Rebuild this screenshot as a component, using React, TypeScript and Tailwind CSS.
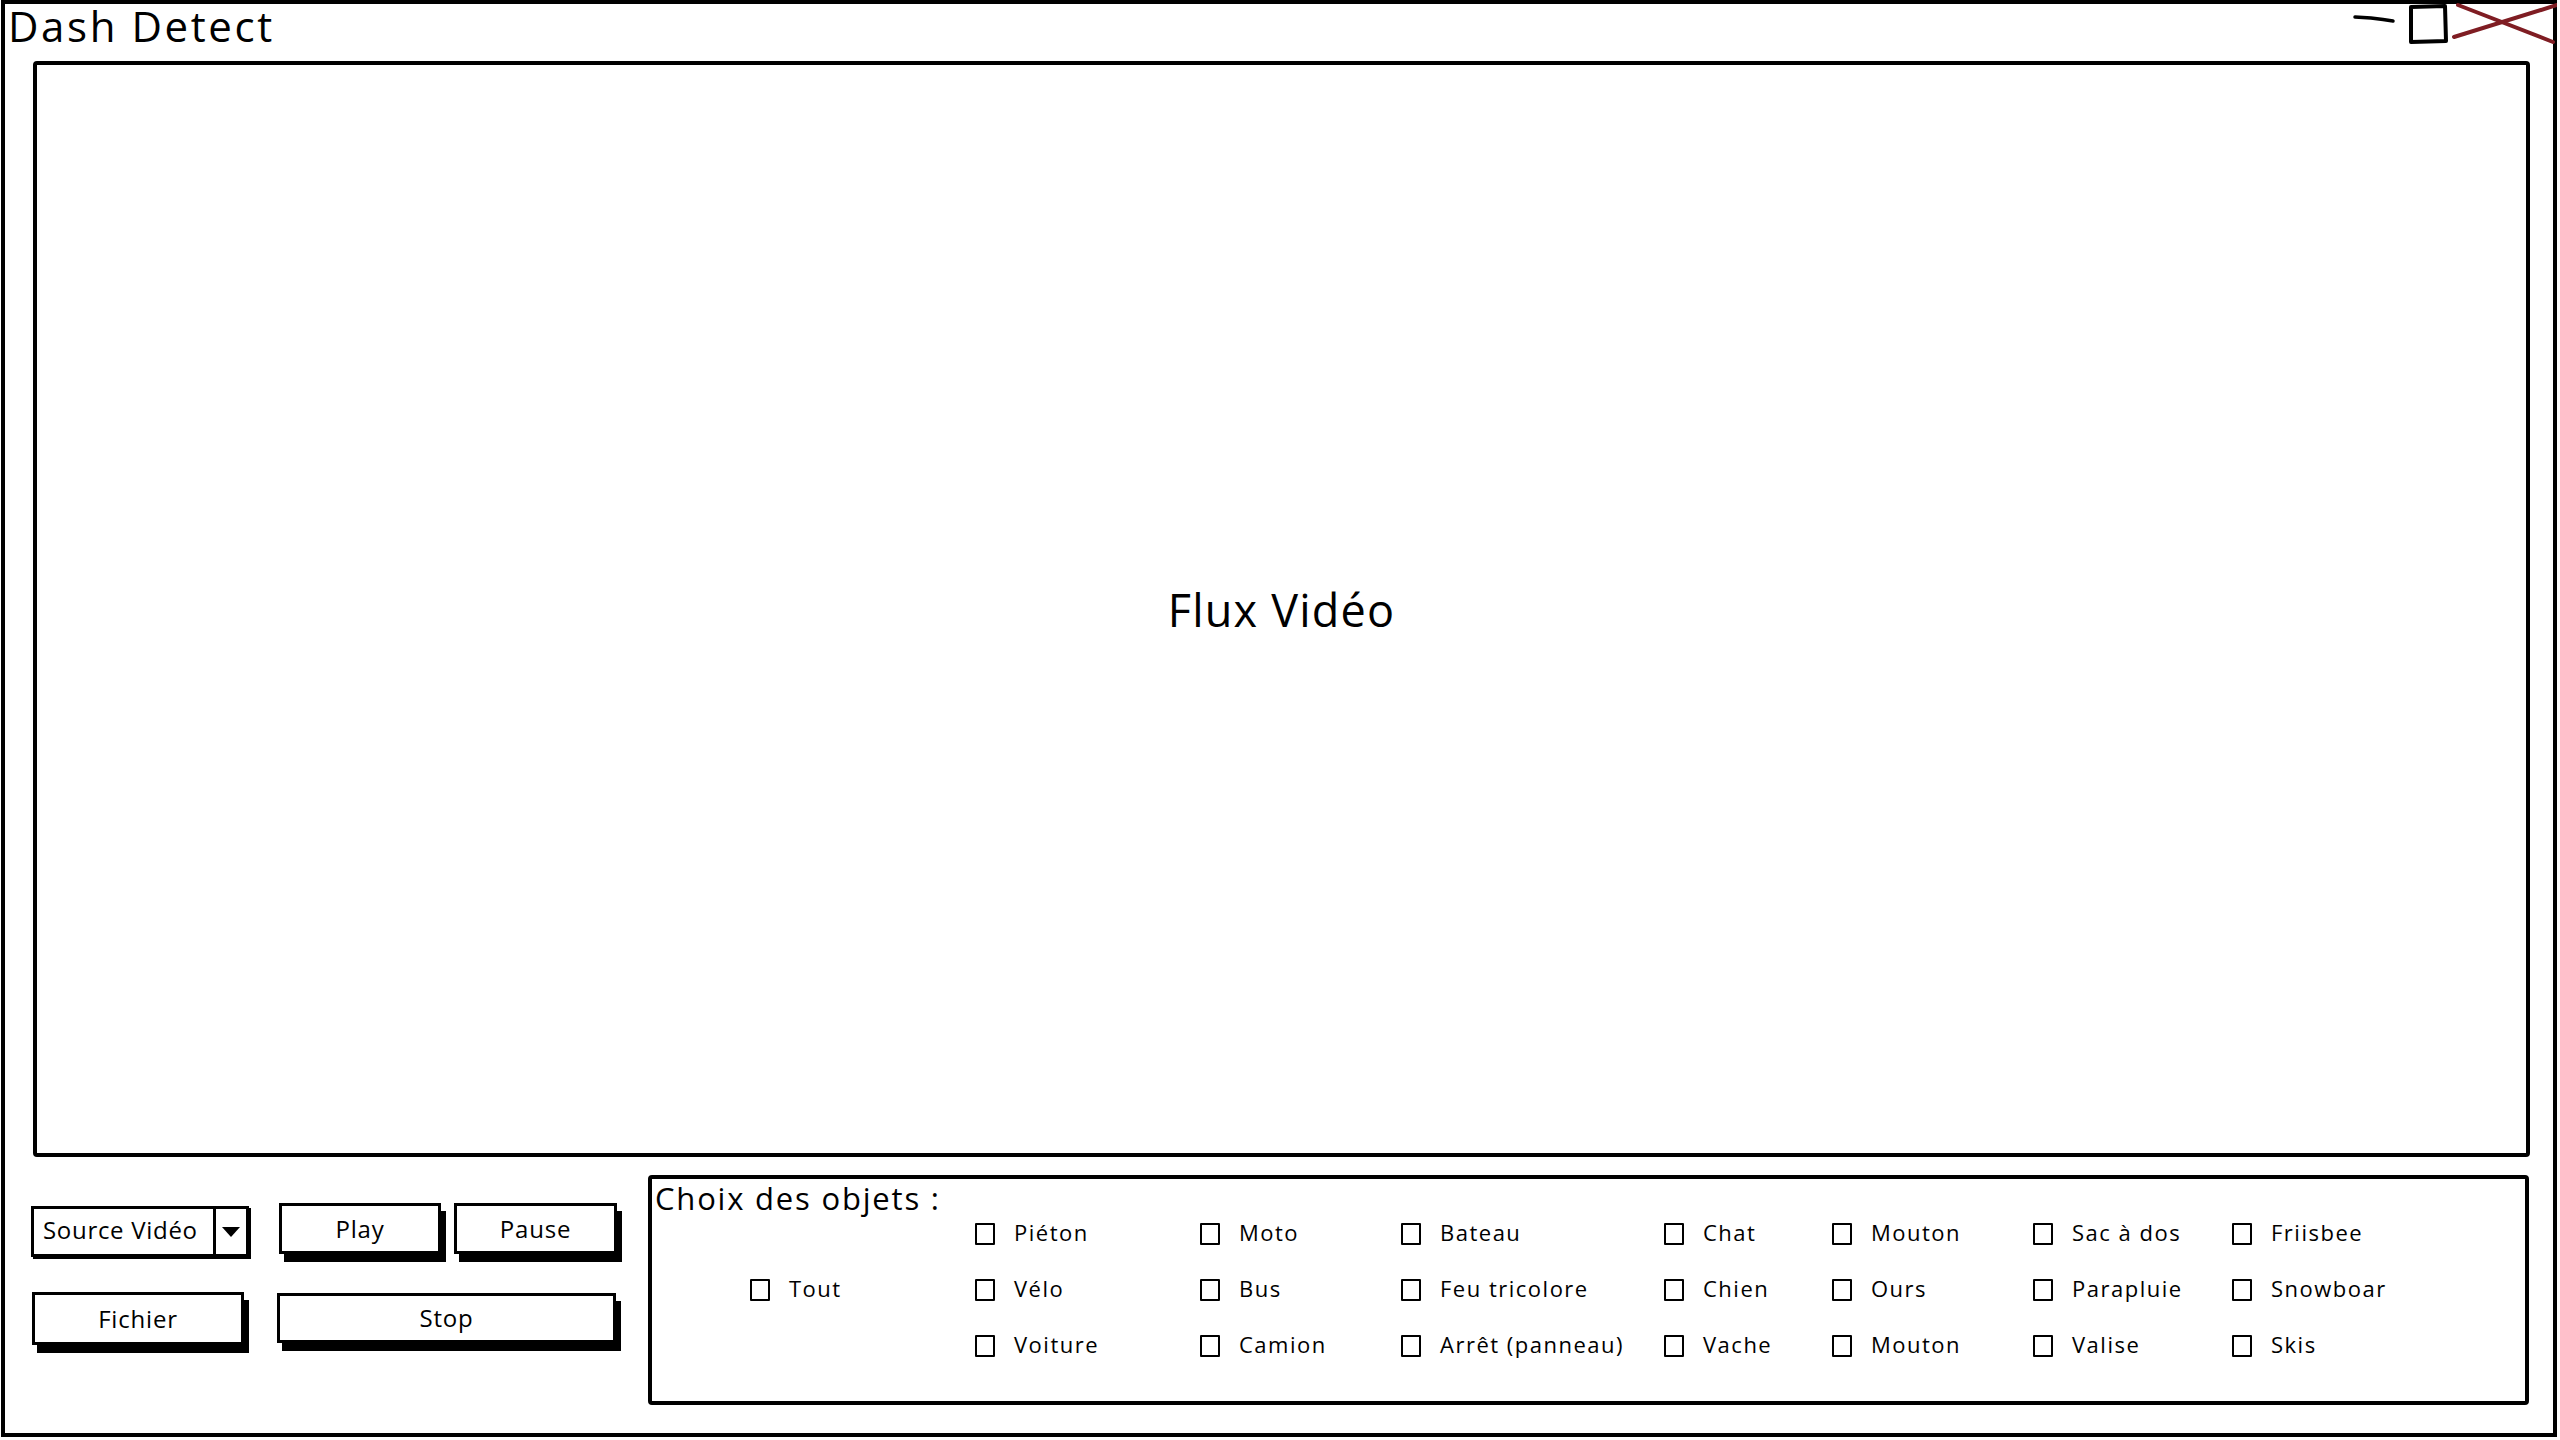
import React from "react";

const columns: { width: number; items: string[]; offset?: boolean }[] = [
  { width: 225, items: ["Tout"], offset: true },
  { width: 225, items: ["Piéton", "Vélo", "Voiture"] },
  { width: 201, items: ["Moto", "Bus", "Camion"] },
  { width: 263, items: ["Bateau", "Feu tricolore", "Arrêt (panneau)"] },
  { width: 168, items: ["Chat", "Chien", "Vache"] },
  { width: 201, items: ["Mouton", "Ours", "Mouton"] },
  { width: 199, items: ["Sac à dos", "Parapluie", "Valise"] },
  { width: 240, items: ["Friisbee", "Snowboar", "Skis"] },
];

function Check({ label }: { label: string }) {
  return (
    <div className="flex h-[22px] items-center">
      <div className="h-[22px] w-[20px] shrink-0 rounded-[1px] border-[2.5px] border-black" />
      <span className="ml-[19px] -mt-[4px] whitespace-nowrap text-[22px] leading-[22px] tracking-[1.5px]">{label}</span>
    </div>
  );
}

function Btn({ label, className }: { label: string; className: string }) {
  return (
    <div
      className={
        "flex items-center justify-center border-[3px] border-black bg-white text-[24px] leading-none tracking-[0.8px] shadow-[5px_8px_0_0_#000] " +
        className
      }
    >
      {label}
    </div>
  );
}

export default function App() {
  return (
    <div className="relative h-[1440px] w-[2560px] overflow-hidden bg-white text-black font-['Open_Sans',sans-serif]">
      <div className="ml-[1px] flex h-[1437px] w-[2556px] flex-col border-4 border-black">
        {/* title bar */}
        <div className="flex h-[57px] shrink-0 items-start justify-between">
          <div className="mt-[1px] pl-[3px] text-[42px] leading-[42px] tracking-[2.6px]">Dash Detect</div>
          <svg width="204" height="44" viewBox="0 0 204 44" className="-mr-[4px] -mt-[4px]">
            <path d="M2 17 L18 18 L30 19.5 L40 21" stroke="#000" strokeWidth="3.5" fill="none" strokeLinecap="round" />
            <path d="M58 7 L92 6 L93 41 L58 42 Z" stroke="#000" strokeWidth="4" fill="none" strokeLinejoin="round" />
            <path d="M101 37 L204 5" stroke="#7f1d23" strokeWidth="4" strokeLinecap="round" />
            <path d="M105 5 L200 42" stroke="#7f1d23" strokeWidth="4" strokeLinecap="round" />
          </svg>
        </div>

        {/* video area */}
        <div className="ml-[28px] mr-[23px] flex h-[1096px] shrink-0 items-center justify-center rounded-[4px] border-4 border-black">
          <span className="text-[45px] leading-none tracking-[1.2px]">Flux Vidéo</span>
        </div>

        {/* bottom area */}
        <div className="mt-[18px] flex">
          {/* controls */}
          <div className="w-[643px] shrink-0 pl-[26px] pt-[28px]">
            <div className="flex h-[89px] items-start">
              <div className="mt-[3px] flex h-[51px] w-[218px] items-stretch border-[3px] border-black shadow-[2px_2px_0_0_#000]">
                <div className="flex flex-1 items-center pl-[9px] pb-[3px] text-[24px] leading-none tracking-[0.7px] whitespace-nowrap">Source Vidéo</div>
                <div className="flex w-[33px] items-center justify-center border-l-[3px] border-black">
                  <svg width="18" height="10" viewBox="0 0 18 10">
                    <path d="M0 0 L18 0 L9 10 Z" fill="#000" />
                  </svg>
                </div>
              </div>
              <Btn label="Play" className="ml-[30px] h-[51px] w-[162px]" />
              <Btn label="Pause" className="ml-[13px] h-[51px] w-[163px]" />
            </div>
            <div className="flex items-start">
              <Btn label="Fichier" className="ml-[1px] h-[53px] w-[212px]" />
              <Btn label="Stop" className="ml-[33px] mt-[1px] h-[50px] w-[339px]" />
            </div>
          </div>

          {/* object choice panel */}
          <div className="h-[230px] w-[1881px] shrink-0 rounded-[4px] border-4 border-black pl-[3px] pt-[4px]">
            <div className="text-[31px] leading-[30px] tracking-[1.8px]">Choix des objets :</div>
            <div className="mt-[10px] ml-[95px] flex">
              {columns.map((col, i) => (
                <div
                  key={i}
                  className={"flex shrink-0 flex-col gap-[34px] " + (col.offset ? "pt-[56px]" : "")}
                  style={{ width: col.width }}
                >
                  {col.items.map((it, j) => (
                    <Check key={j} label={it} />
                  ))}
                </div>
              ))}
            </div>
          </div>
        </div>
      </div>
    </div>
  );
}
